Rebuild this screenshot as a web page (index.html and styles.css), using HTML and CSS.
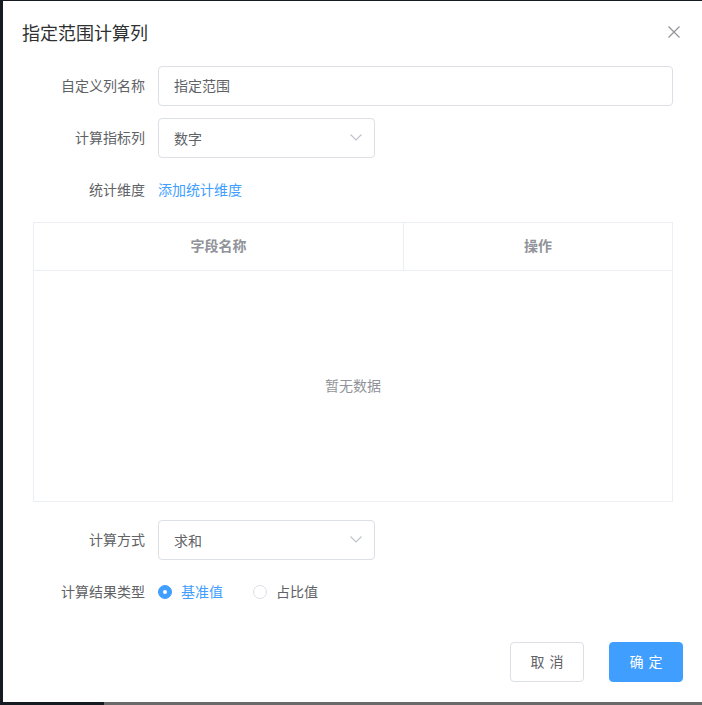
FILE: index.html
```html
<!DOCTYPE html>
<html lang="zh-CN">
<head>
<meta charset="utf-8">
<title>指定范围计算列</title>
<link rel="stylesheet" href="styles.css">
</head>
<body>
<div class="page">
  <div class="dialog">
    <div class="dialog-header">
      <span class="dialog-title">指定范围计算列</span>
      <button class="close" aria-label="关闭">
        <svg width="12" height="12" viewBox="0 0 12 12"><path d="M0.5 0.5L11.5 11.5M11.5 0.5L0.5 11.5" stroke="#909399" stroke-width="1.2" fill="none"/></svg>
      </button>
    </div>
    <div class="dialog-body">
      <div class="form-item">
        <label class="label">自定义列名称</label>
        <div class="input wide">指定范围</div>
      </div>
      <div class="form-item">
        <label class="label">计算指标列</label>
        <div class="input select">数字
          <svg class="arrow" width="12" height="7" viewBox="0 0 12 7"><path d="M0.5 0.5L6 6L11.5 0.5" stroke="#c0c4cc" stroke-width="1.2" fill="none"/></svg>
        </div>
      </div>
      <div class="form-item">
        <label class="label">统计维度</label>
        <a class="link">添加统计维度</a>
      </div>
      <div class="table">
        <div class="thead">
          <div class="th col1">字段名称</div>
          <div class="th col2">操作</div>
        </div>
        <div class="empty">暂无数据</div>
      </div>
      <div class="form-item after-table">
        <label class="label">计算方式</label>
        <div class="input select">求和
          <svg class="arrow" width="12" height="7" viewBox="0 0 12 7"><path d="M0.5 0.5L6 6L11.5 0.5" stroke="#c0c4cc" stroke-width="1.2" fill="none"/></svg>
        </div>
      </div>
      <div class="form-item">
        <label class="label">计算结果类型</label>
        <div class="radios">
          <span class="radio checked"><span class="dot"></span><span class="rtext">基准值</span></span>
          <span class="radio"><span class="dot"></span><span class="rtext">占比值</span></span>
        </div>
      </div>
    </div>
    <div class="dialog-footer">
      <button class="btn">取 消</button>
      <button class="btn primary">确 定</button>
    </div>
  </div>
  <div class="bottom-strip"></div>
</div>
</body>
</html>
```
FILE: styles.css
```css
* { box-sizing: border-box; }
html, body { margin: 0; padding: 0; }
body {
  background: #161b21;
  font-family: "Noto Sans CJK SC", "Noto Sans", sans-serif;
  width: 702px;
  height: 705px;
  overflow: hidden;
}
.page {
  display: flex;
  flex-direction: column;
  padding-top: 1px;
}
.dialog {
  margin-left: 3px;
  width: 699px;
  height: 701px;
  background: #fff;
  display: flex;
  flex-direction: column;
  position: relative;
}
.bottom-strip {
  height: 3px;
  margin-left: 104px;
  background: #6a6a6a;
}
.dialog-header {
  padding: 20px 20px 10px 19px;
  height: 54px;
}
.dialog-title {
  font-size: 18px;
  line-height: 23px;
  color: #303133;
  display: block;
}
.close {
  position: absolute;
  top: 25px;
  right: 22px;
  width: 12px;
  height: 12px;
  padding: 0;
  border: 0;
  background: none;
  display: flex;
}
.dialog-body {
  padding: 11px 29px 0 30px;
  flex: 1;
}
.form-item {
  display: flex;
  align-items: center;
  height: 40px;
  margin-bottom: 12px;
}
.form-item.after-table { margin-top: 18px; }
.label {
  width: 125px;
  flex: none;
  text-align: right;
  padding-right: 13px;
  padding-bottom: 2px;
  font-size: 14px;
  color: #606266;
}
.input {
  height: 40px;
  border: 1px solid #dcdfe6;
  border-radius: 4px;
  padding: 0 15px 2px 15px;
  display: flex;
  align-items: center;
  font-size: 14px;
  color: #606266;
}
.input.wide { flex: 1; }
.input.select {
  width: 217px;
  justify-content: space-between;
  padding-right: 12px;
  padding-bottom: 1px;
}
.arrow { display: block; }
.link {
  font-size: 14px;
  color: #409eff;
  padding-bottom: 2px;
}
.table {
  height: 280px;
  border: 1px solid #ebeef5;
  display: flex;
  flex-direction: column;
}
.thead {
  display: flex;
  height: 48px;
  border-bottom: 1px solid #ebeef5;
}
.th {
  display: flex;
  align-items: center;
  justify-content: center;
  font-size: 14px;
  font-weight: bold;
  color: #909399;
  padding-bottom: 3px;
}
.th.col1 { width: 370px; border-right: 1px solid #ebeef5; }
.th.col2 { flex: 1; }
.empty {
  flex: 1;
  display: flex;
  align-items: center;
  justify-content: center;
  font-size: 14px;
  color: #909399;
  padding-bottom: 2px;
}
.radios {
  display: flex;
  align-items: center;
  gap: 30px;
}
.radio {
  display: flex;
  align-items: center;
  font-size: 14px;
  color: #606266;
}
.radio .rtext { padding-bottom: 2px; }
.radio .dot {
  width: 14px;
  height: 14px;
  border-radius: 50%;
  border: 1px solid #dcdfe6;
  background: #fff;
  position: relative;
  margin-right: 9px;
}
.radio.checked { color: #409eff; }
.radio.checked .dot {
  background: #409eff;
  border-color: #409eff;
}
.radio.checked .dot::after {
  content: "";
  position: absolute;
  width: 4px;
  height: 4px;
  border-radius: 50%;
  background: #fff;
  left: 4px;
  top: 4px;
}
.dialog-footer {
  display: flex;
  justify-content: flex-end;
  gap: 25px;
  padding: 0 19px 20px 20px;
}
.btn {
  width: 74px;
  height: 40px;
  border: 1px solid #dcdfe6;
  border-radius: 4px;
  background: #fff;
  color: #606266;
  font-family: "Noto Sans CJK SC", "Noto Sans", sans-serif;
  font-size: 14px;
  letter-spacing: 1px;
  padding: 0 0 2px 1px;
}
.btn.primary {
  background: #409eff;
  border-color: #409eff;
  color: #fff;
}
```
